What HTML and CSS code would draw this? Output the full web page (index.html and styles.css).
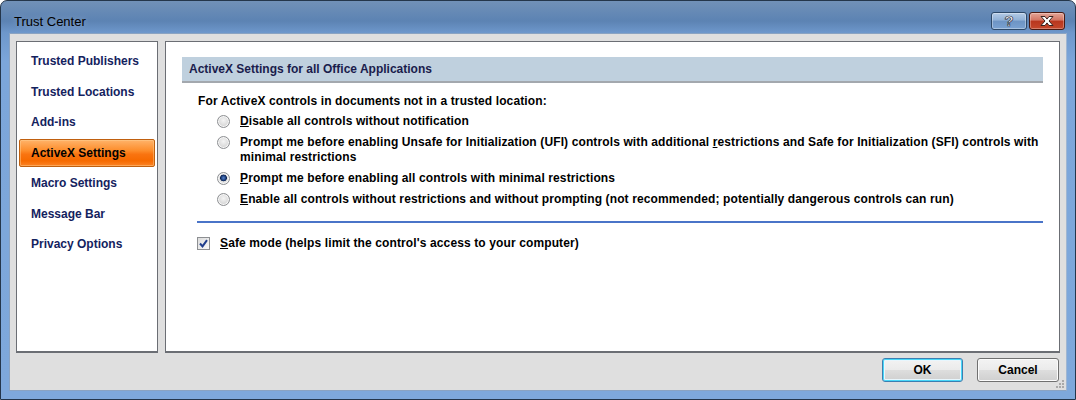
FILE: index.html
```html
<!DOCTYPE html>
<html lang="en">
<head>
    <meta charset="UTF-8">
    <title>Trust Center</title>
    <link rel="stylesheet" href="styles.css">
</head>
<body>
<div class="window">
    <div class="titlebar">
        <span class="title">Trust Center</span>
        <div class="caption">
            <span class="cap-btn help">?</span>
            <span class="cap-btn close">
                <svg width="16" height="12" viewBox="0 0 16 12">
                    <path d="M2 1.5h4l2 2.6 2-2.6h4l-4 4.5 4 4.5h-4l-2-2.6-2 2.6h-4l4-4.5z" fill="#fff" stroke="#3a2420" stroke-width="1" stroke-linejoin="round"/>
                </svg>
            </span>
        </div>
    </div>
    <div class="client">
        <div class="panes">
            <ul class="nav">
                <li>Trusted Publishers</li>
                <li>Trusted Locations</li>
                <li>Add-ins</li>
                <li class="active">ActiveX Settings</li>
                <li>Macro Settings</li>
                <li>Message Bar</li>
                <li>Privacy Options</li>
            </ul>
            <div class="content">
                <div class="section-head">ActiveX Settings for all Office Applications</div>
                <div class="section-body">
                    <div class="lead">For ActiveX controls in documents not in a trusted location:</div>
                    <div class="options">
                        <div class="option"><span class="radio"></span><span><u>D</u>isable all controls without notification</span></div>
                        <div class="option"><span class="radio"></span><span>Prompt me before enabling Unsafe for Initialization (UFI) controls with additional <u>r</u>estrictions and Safe for Initialization (SFI) controls with<br>minimal restrictions</span></div>
                        <div class="option"><span class="radio checked"></span><span><u>P</u>rompt me before enabling all controls with minimal restrictions</span></div>
                        <div class="option"><span class="radio"></span><span><u>E</u>nable all controls without restrictions and without prompting (not recommended; potentially dangerous controls can run)</span></div>
                    </div>
                </div>
                <div class="separator"></div>
                <div class="check-row">
                    <span class="checkbox">
                        <svg width="9" height="9" viewBox="0 0 9 9">
                            <path d="M1 4.5l2.5 2.8L8 1.2" fill="none" stroke="#1f3d8c" stroke-width="2"/>
                        </svg>
                    </span>
                    <span><u>S</u>afe mode (helps limit the control's access to your computer)</span>
                </div>
            </div>
        </div>
        <div class="buttons">
            <button class="btn default">OK</button>
            <button class="btn">Cancel</button>
        </div>
        <svg class="grip" width="9" height="9" viewBox="0 0 9 9">
            <rect x="6" y="0" width="2" height="2" fill="#a9a9a9"/>
            <rect x="3" y="3" width="2" height="2" fill="#a9a9a9"/>
            <rect x="6" y="3" width="2" height="2" fill="#a9a9a9"/>
            <rect x="0" y="6" width="2" height="2" fill="#a9a9a9"/>
            <rect x="3" y="6" width="2" height="2" fill="#a9a9a9"/>
            <rect x="6" y="6" width="2" height="2" fill="#a9a9a9"/>
        </svg>
    </div>
</div>
</body>
</html>
```

FILE: styles.css
```css
html, body {
    margin: 0;
    padding: 0;
    background: #fff;
}
.window {
    box-sizing: border-box;
    width: 1076px;
    height: 400px;
    border: 1px solid #24364b;
    border-radius: 7px 7px 0 0;
    padding: 0 8px 8px 8px;
    background: linear-gradient(#7191b8 0px, #5c83b3 20px, #6e98cc 32px, #7ca6da 60px, #7ea8db 100%);
    display: flex;
    flex-direction: column;
    font-family: "Liberation Sans", Arial, sans-serif;
}
.titlebar {
    height: 32px;
    display: flex;
    justify-content: space-between;
    align-items: flex-start;
    padding-left: 5px;
}
.title {
    font-size: 13px;
    color: #000;
    line-height: 15px;
    margin-top: 13px;
    text-shadow: 0 0 6px rgba(255, 255, 255, 0.35);
}
.caption {
    display: flex;
    gap: 2px;
    margin-top: 11px;
    margin-right: 2px;
}
.cap-btn {
    box-sizing: border-box;
    height: 18px;
    border-radius: 3px;
    display: flex;
    justify-content: center;
    align-items: center;
}
.help {
    width: 36px;
    border: 1px solid #2c4868;
    background: linear-gradient(#b4cbe6 0%, #8fb0d6 45%, #6d94c4 50%, #7aa2d2 100%);
    box-shadow: inset 0 0 0 1px rgba(255, 255, 255, 0.35);
    color: #fff;
    font-weight: bold;
    font-size: 15px;
    line-height: 14px;
    -webkit-text-stroke: 0.7px #2a2f3a;
}
.close {
    width: 36px;
    border: 1px solid #4a1a12;
    background: linear-gradient(#e3a497 0%, #d27563 45%, #b8361e 50%, #c4482c 100%);
    box-shadow: inset 0 0 0 1px rgba(255, 255, 255, 0.3);
}
.client {
    position: relative;
    flex: 1;
    background: #dfdfdf;
    border: 1px solid #8aa3c2;
    border-right-color: #9fb6d2;
    padding: 7px 6px 0 6px;
    display: flex;
    flex-direction: column;
}
.panes {
    display: flex;
    gap: 7px;
    height: 312px;
}
.nav {
    box-sizing: border-box;
    width: 142px;
    margin: 0;
    padding: 5px 2px 0 2px;
    list-style: none;
    background: #fff;
    border: 1px solid #6b6e74;
    border-bottom-width: 2px;
}
.nav li {
    box-sizing: border-box;
    height: 28px;
    line-height: 28px;
    margin-bottom: 2.5px;
    padding-left: 12px;
    font-size: 12px;
    font-weight: bold;
    color: #14225e;
}
.nav li.active {
    padding-left: 11px;
    line-height: 26px;
    color: #000;
    border: 1px solid #c0600f;
    border-radius: 2px;
    background: linear-gradient(#ffb36a 0%, #fd8e2c 40%, #f97410 55%, #f66a00 80%, #fb8427 100%);
    box-shadow: inset 0 0 0 1px rgba(255, 210, 150, 0.45);
}
.content {
    box-sizing: border-box;
    flex: 1;
    background: #fff;
    border: 1px solid #6b6e74;
    border-bottom-width: 2px;
    padding: 15px 16px 0 16px;
    font-size: 12px;
    letter-spacing: 0.12px;
    font-weight: bold;
    color: #000;
}
.section-head {
    box-sizing: border-box;
    height: 26px;
    line-height: 24px;
    padding-left: 7px;
    background: #bfd0de;
    border-bottom: 2px solid #a3a8ae;
    font-size: 12px;
    letter-spacing: 0;
    color: #1a1c4c;
}
.section-body {
    padding-left: 16px;
    padding-top: 11px;
}
.lead {
    line-height: 15px;
    margin-bottom: 5px;
}
.options {
    padding-left: 19px;
}
.option {
    display: flex;
    align-items: flex-start;
    gap: 10px;
    line-height: 15px;
    margin-bottom: 6px;
}
.radio {
    box-sizing: border-box;
    flex: none;
    width: 13px;
    height: 13px;
    margin-top: 1px;
    border-radius: 50%;
    border: 1px solid #8d8f92;
    background: radial-gradient(circle at 50% 40%, #f4f4f4 0%, #dcdcdc 55%, #c4c4c4 100%);
    box-shadow: inset 0 0 0 1px #f7f7f7;
}
.radio.checked {
    background: radial-gradient(circle at 50% 45%, #5a86cc 0%, #1c3f7e 28%, #0e2451 38%, #dadada 45%, #ececec 70%, #c8c8c8 100%);
}
.separator {
    margin: 14px 0 0 15px;
    height: 0;
    border-top: 2px solid #4a74c8;
}
.check-row {
    display: flex;
    align-items: flex-start;
    gap: 10px;
    margin: 13px 0 0 15px;
    line-height: 15px;
}
.checkbox {
    box-sizing: border-box;
    flex: none;
    width: 13px;
    height: 13px;
    margin-top: 1px;
    border: 1px solid #8d8f92;
    background: linear-gradient(135deg, #dcdcdc, #f8f8f8);
    display: flex;
    justify-content: center;
    align-items: center;
}
.buttons {
    display: flex;
    justify-content: flex-end;
    gap: 14px;
    margin-top: 5px;
    margin-right: 1px;
}
.btn {
    box-sizing: border-box;
    width: 82px;
    height: 24px;
    border: 1px solid #707070;
    border-radius: 3px;
    background: linear-gradient(#f3f3f3 0%, #ebebeb 48%, #dddddd 52%, #cfcfcf 100%);
    box-shadow: inset 0 0 0 1px #fcfcfc;
    font-family: "Liberation Sans", Arial, sans-serif;
    font-size: 12px;
    font-weight: bold;
    color: #000;
    padding: 0;
}
.btn.default {
    width: 81px;
    border-color: #3c7fb1;
    box-shadow: inset 0 0 0 1px #48d7f8, inset 0 0 0 2px #e8f6fd;
}
.grip {
    position: absolute;
    right: 1px;
    bottom: 1px;
}
```
